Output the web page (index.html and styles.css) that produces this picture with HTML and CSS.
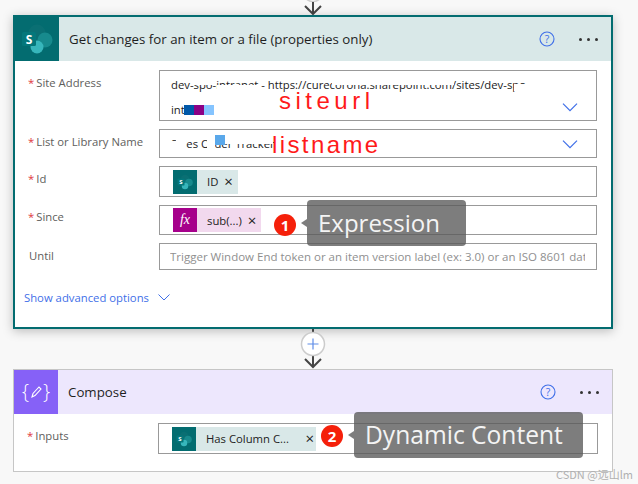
FILE: index.html
```
<!DOCTYPE html>
<html lang="en">
<head>
<meta charset="utf-8">
<title>Flow</title>
<link rel="stylesheet" href="styles.css">
</head>
<body>
<main class="page">
  <div class="connector top">
    <svg class="conn-svg" width="24" height="15" viewBox="0 0 24 15"><circle cx="12" cy="-9" r="10.5" fill="#fff" stroke="#ccc" stroke-width="1.5"/><path d="M12 2V14M4 6l8 8 8-8" fill="none" stroke="#444" stroke-width="2"/></svg>
  </div>
  <section class="card active">
    <header class="head teal">
      <div class="icon-box teal-box">
        <svg width="32" height="32" viewBox="0 0 32 32"><circle cx="16" cy="10" r="8.5" fill="#0a6f73"/><circle cx="24" cy="17" r="7.5" fill="#178a8d"/><circle cx="16" cy="24" r="6.5" fill="#37b6bb"/><rect x="1" y="9" width="14" height="14" rx="1.5" fill="#04777b"/><text x="8" y="20.500" class="s-letter">S</text></svg>
      </div>
      <h2 class="title">Get changes for an item or a file (properties only)</h2>
      <svg class="help" width="16" height="16" viewBox="0 0 16 16"><circle cx="8" cy="8" r="7" fill="none" stroke="#3f6fe8" stroke-width="1.1"/><text x="8" y="11.7" class="q">?</text></svg>
      <div class="dots"><i></i><i></i><i></i></div>
    </header>
    <div class="body body-1">
      <div class="row r1">
        <label class="label"><span class="req">*</span>Site Address</label>
        <div class="input dd tall">
          <div class="lines">
            <span class="ln">dev-spo-intranet - https://curecorona.sharepoint.com/sites/dev-spo</span>
            <span class="ln second">int</span>
          </div>
          <svg class="chev chev-tall" width="16" height="9" viewBox="0 0 16 9"><path d="M1 .7l7 7 7-7" fill="none" stroke="#3f6fe8" stroke-width="1.2"/></svg>
          <i class="wipe w1"></i><i class="wipe w2"></i><i class="wipe w4"></i><i class="wipe w5"></i>
          <i class="blk b1"></i><i class="blk b2"></i><i class="blk b3"></i>
        </div>
      </div>
      <div class="row r2">
        <label class="label"><span class="req">*</span>List or Library Name</label>
        <div class="input dd short">
          <span class="ln">Sales Order Tracker</span>
          <svg class="chev" width="16" height="9" viewBox="0 0 16 9"><path d="M1 .7l7 7 7-7" fill="none" stroke="#3f6fe8" stroke-width="1.2"/></svg>
          <i class="wipe w3"></i><i class="wipe w6"></i><i class="wipe w7"></i><i class="wipe w8"></i><i class="blk b4"></i>
        </div>
      </div>
      <div class="row r3">
        <label class="label"><span class="req">*</span>Id</label>
        <div class="input token-in id-in">
          <div class="token sp">
            <div class="tk-icon teal-box"><svg width="16" height="16" viewBox="0 0 32 32"><circle cx="16" cy="10" r="8.5" fill="#0a6f73"/><circle cx="24" cy="17" r="7.5" fill="#178a8d"/><circle cx="16" cy="24" r="6.5" fill="#37b6bb"/><rect x="1" y="9" width="14" height="14" rx="1.5" fill="#04777b"/><text x="8" y="20.500" class="s-letter">S</text></svg></div>
            <span class="tk-text">ID</span><span class="x">×</span>
          </div>
        </div>
      </div>
      <div class="row r4">
        <label class="label since"><span class="req">*</span>Since</label>
        <div class="input token-in since-in">
          <div class="token fx">
            <div class="tk-icon fx-box">fx</div>
            <span class="tk-text">sub(...)</span><span class="x">×</span>
          </div>
        </div>
      </div>
      <div class="row r5">
        <label class="label plain">Until</label>
        <div class="input until">
          <span class="placeholder">Trigger Window End token or an item version label (ex: 3.0) or an ISO 8601 date</span>
        </div>
      </div>
      <div class="advanced">
        <span>Show advanced options</span>
        <svg width="12" height="7" viewBox="0 0 12 7"><path d="M.5.5L6 6l5.500-5.500" fill="none" stroke="#3f6fe8"/></svg>
      </div>
    </div>
  </section>
  <div class="connector mid">
    <svg class="conn-svg" width="28" height="40" viewBox="0 0 28 40"><path d="M14 0V38M6 30l8 8 8-8" fill="none" stroke="#444" stroke-width="2"/><circle cx="14" cy="15" r="11.500" fill="#fff" stroke="#ccc" stroke-width="1.500"/><path d="M14 9.500v11M8.500 15h11" stroke="#5f8de8" stroke-width="1.200"/></svg>
  </div>
  <section class="card plain-card">
    <header class="head purple">
      <div class="icon-box purple-box">
        <span class="brace">{</span>
        <svg width="12" height="14" viewBox="0 0 12 14"><path d="M2 12l1-3.500L9 2l2 2-6 6.500z" fill="none" stroke="#fff" stroke-width="1.100"/></svg>
        <span class="brace">}</span>
      </div>
      <h2 class="title">Compose</h2>
      <svg class="help" width="16" height="16" viewBox="0 0 16 16"><circle cx="8" cy="8" r="7" fill="none" stroke="#3f6fe8" stroke-width="1.100"/><text x="8" y="11.700" class="q">?</text></svg>
      <div class="dots"><i></i><i></i><i></i></div>
    </header>
    <div class="body body-2">
      <div class="row r6">
        <label class="label"><span class="req">*</span>Inputs</label>
        <div class="input token-in in-in">
          <div class="token sp wide">
            <div class="tk-icon teal-box"><svg width="16" height="16" viewBox="0 0 32 32"><circle cx="16" cy="10" r="8.5" fill="#0a6f73"/><circle cx="24" cy="17" r="7.5" fill="#178a8d"/><circle cx="16" cy="24" r="6.5" fill="#37b6bb"/><rect x="1" y="9" width="14" height="14" rx="1.5" fill="#04777b"/><text x="8" y="20.500" class="s-letter">S</text></svg></div>
            <span class="tk-text">Has Column C...</span><span class="x">×</span>
          </div>
        </div>
      </div>
    </div>
  </section>
</main>
<div class="note siteurl">siteurl</div>
<div class="note listname">listname</div>
<div class="badge b-one">1</div>
<div class="callout c-one">Expression</div>
<div class="badge b-two">2</div>
<div class="callout c-two">Dynamic Content</div>
<div class="watermark">CSDN @远山lm</div>
</body>
</html>
```
FILE: styles.css
```
* { box-sizing: border-box; }
html, body { margin: 0; height: 100%; }
body {
  position: relative;
  width: 638px;
  height: 484px;
  overflow: hidden;
  background: #f8f8f8;
  font-family: "Open Sans", "Noto Sans", sans-serif;
  color: #222;
}
.page { display: flex; flex-direction: column; width: 600px; margin-left: 13px; }
.connector { display: flex; justify-content: center; }
.connector.top { height: 15px; }
.connector.mid { height: 40px; }
.conn-svg { display: block; flex: none; }
.card { background: #fff; display: flex; flex-direction: column; }
.card.active { height: 314px; border: 2px solid #036c70; box-shadow: 0 2px 10px rgba(0,0,0,.25); }
.card.plain-card { height: 103px; border: 1px solid #c6c6c6; }
.head { display: flex; align-items: center; height: 44px; flex: none; }
.teal { background: #d9e8e8; }
.purple { background: #ede7fd; }
.icon-box { width: 44px; height: 44px; flex: none; display: flex; align-items: center; justify-content: center; }
.teal-box { background: #036c70; }
.purple-box { background: #8661f7; color: #fff; gap: 1px; }
.brace { font-size: 20px; font-weight: 300; line-height: 1; }
.s-letter { font: 700 12px "Open Sans", sans-serif; fill: #fff; text-anchor: middle; }
.q { font: 10.500px "Open Sans", sans-serif; fill: #3f6fe8; text-anchor: middle; }
.title { flex: 1; margin: 0 0 0 10px; font-size: 13.300px; font-weight: 400; color: #1f1f1f; white-space: nowrap; }
.help { flex: none; margin-right: 24px; }
.dots { display: flex; gap: 5px; margin-right: 13px; }
.dots i { width: 3px; height: 3px; border-radius: 50%; background: #333; }
.body { position: relative; flex: 1; }
.body-1 { padding: 9px 14px 0 14px; }
.body-2 { padding: 9px 14px 0 14px; }
.row { display: flex; margin-bottom: 8px; }
.label { width: 130px; flex: none; font-size: 11.300px; color: #605e5c; padding-top: 5px; white-space: nowrap; }
.label.since { padding-top: 4px; }
.req { color: #e0383e; margin-left: -1px; margin-right: 2px; }
.input { position: relative; border: 1px solid #999; background: #fff; flex: 1; display: flex; align-items: center; min-width: 0; }
.tall { height: 51px; }
.short { height: 29px; }
.id-in { height: 31px; }
.since-in { height: 30px; }
.until { height: 27px; }
.in-in { height: 31px; }
.token-in { padding-left: 13px; }
.lines { display: flex; flex-direction: column; padding-left: 11px; gap: 10px; align-self: flex-start; padding-top: 6px; }
.ln { font-size: 11.300px; color: #222; white-space: nowrap; line-height: 15px; }
.dd > .ln { padding-left: 11px; }
.chev { position: absolute; right: 18px; top: 10px; }
.chev-tall { top: 32px; }
.wipe { position: absolute; background: #fff; display: block; }
.w1 { left: 33px; top: 5px; width: 20px; height: 9px; }
.w2 { left: 57px; top: 14px; width: 42px; height: 6px; }
.w4 { left: 172px; top: 5px; width: 122px; height: 9px; }
.w5 { left: 354px; top: 13px; width: 30px; height: 7px; }
.w3 { left: 16px; top: 4px; width: 10px; height: 18px; }
.w6 { left: 65px; top: 4px; width: 48px; height: 10px; }
.w7 { left: 10px; top: 11px; width: 6px; height: 10px; }
.w8 { left: 47px; top: 4px; width: 8px; height: 18px; }
.blk { position: absolute; display: block; height: 10px; }
.b1 { left: 24px; top: 34px; background: #0058a8; width: 10px; }
.b2 { left: 34px; top: 34px; background: #8b0085; width: 10px; }
.b3 { left: 44px; top: 34px; background: #85c4ff; width: 10px; }
.b4 { left: 55px; top: 5px; background: #5aa8ea; width: 10px; }
.token { display: flex; align-items: center; height: 24px; }
.sp { background: #d9e8e8; }
.fx { background: #f2d9ee; }
.tk-icon { width: 24px; height: 24px; display: flex; align-items: center; justify-content: center; flex: none; }
.fx-box { background: #a6008b; color: #fff; font: italic 400 14px "Liberation Serif", serif; }
.tk-text { font-size: 11.300px; padding-left: 10px; color: #222; white-space: nowrap; }
.x { font-size: 15px; line-height: 1; margin-left: 6px; padding-right: 5px; color: #222; }
.wide { width: 144px; }
.wide .x { margin-left: auto; padding-right: 2px; }
.placeholder { display: block; margin: 0 11px 0 10px; font-size: 11.500px; color: #8f8f8f; white-space: nowrap; overflow: hidden; }
.advanced { display: flex; align-items: center; gap: 9px; margin-top: 20px; margin-left: -5px; font-size: 11.300px; color: #3f6fe8; }
.note { position: absolute; font-family: "Liberation Sans", sans-serif; color: #ff1a1a; line-height: 1; white-space: nowrap; font-size: 24px; }
.siteurl { left: 279px; top: 89px; letter-spacing: 4.5px; }
.listname { left: 272px; top: 133px; letter-spacing: 2.4px; }
.badge { position: absolute; width: 22px; height: 22px; border-radius: 50%; background: #f5200a; color: #fff; font-size: 15px; font-weight: 700; display: flex; align-items: center; justify-content: center; }
.b-one { left: 274px; top: 214px; }
.b-two { left: 321px; top: 425px; }
.callout { position: absolute; background: rgba(88,88,88,.78); border-radius: 4px; color: #f4f4f4; display: flex; align-items: center; white-space: nowrap; font-size: 24px; padding-bottom: 2px; }
.callout::before { content: ""; position: absolute; left: -6px; top: 50%; margin-top: -4px; border: 4px solid transparent; border-left: 0; border-right: 6px solid rgba(88,88,88,.78); }
.c-one { left: 307px; top: 200px; width: 159px; height: 46px; padding-left: 11px; }
.c-two { left: 354px; top: 412px; width: 229px; height: 46px; padding-left: 11px; font-size: 24.600px; }
.watermark { position: absolute; left: 556px; top: 466px; font: 11px "Noto Sans CJK SC", "Noto Sans", sans-serif; color: #b0b0b0; white-space: nowrap; }
```
